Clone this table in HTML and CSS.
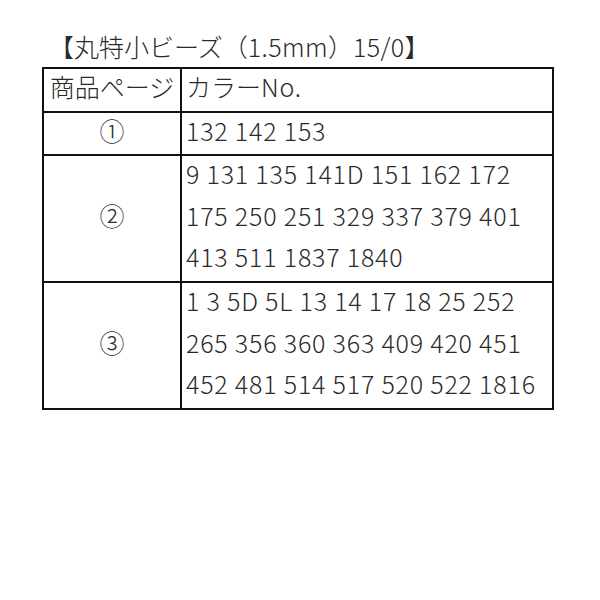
FILE: index.html
```html
<!DOCTYPE html>
<html lang="ja">
<head>
<meta charset="utf-8">
<link rel="stylesheet" href="styles.css">
</head>
<body>
<div class="page">
  <div class="title">【丸特小ビーズ（<span class="title-latin">1.5mm</span>）<span class="title-latin">15/0</span>】</div>
  <table class="beads">
    <tr>
      <td class="page-col"><div class="txt">商品ページ</div></td>
      <td class="color-col"><div class="txt">カラー<span class="num">No.</span></div></td>
    </tr>
    <tr>
      <td class="page-col"><div class="txt">①</div></td>
      <td class="color-col"><div class="txt num">132 142 153</div></td>
    </tr>
    <tr>
      <td class="page-col"><div class="txt">②</div></td>
      <td class="color-col"><div class="txt num">9 131 135 141D 151 162 172<br>175 250 251 329 337 379 401<br>413 511 1837 1840</div></td>
    </tr>
    <tr>
      <td class="page-col"><div class="txt">③</div></td>
      <td class="color-col"><div class="txt num">1 3 5D 5L 13 14 17 18 25 252<br>265 356 360 363 409 420 451<br>452 481 514 517 520 522 1816</div></td>
    </tr>
  </table>
</div>
</body>
</html>
```
FILE: styles.css
```css
html, body {
  margin: 0;
  padding: 0;
  background: #fff;
}
body {
  font-family: "Noto Sans CJK JP", "Noto Sans", sans-serif;
  font-weight: 300;
  color: #2a2a2a;
}
.page {
  padding: 28px 0 0 42px;
}
.title {
  font-size: 25px;
  line-height: 36px;
  padding-left: 7px;
  height: 39px;
}
.title-latin {
  letter-spacing: 0.4px;
}
.num {
  letter-spacing: 0.8px;
}
.beads {
  border-collapse: collapse;
  width: 512px;
  font-size: 25px;
  line-height: 41.6px;
}
.beads td {
  border: 2px solid #111;
  padding: 0 4px;
  vertical-align: middle;
}
.txt {
  margin: -3px 0 3px;
}
.page-col {
  width: 128px;
  text-align: center;
}
.color-col {
  text-align: left;
  white-space: nowrap;
}
```
